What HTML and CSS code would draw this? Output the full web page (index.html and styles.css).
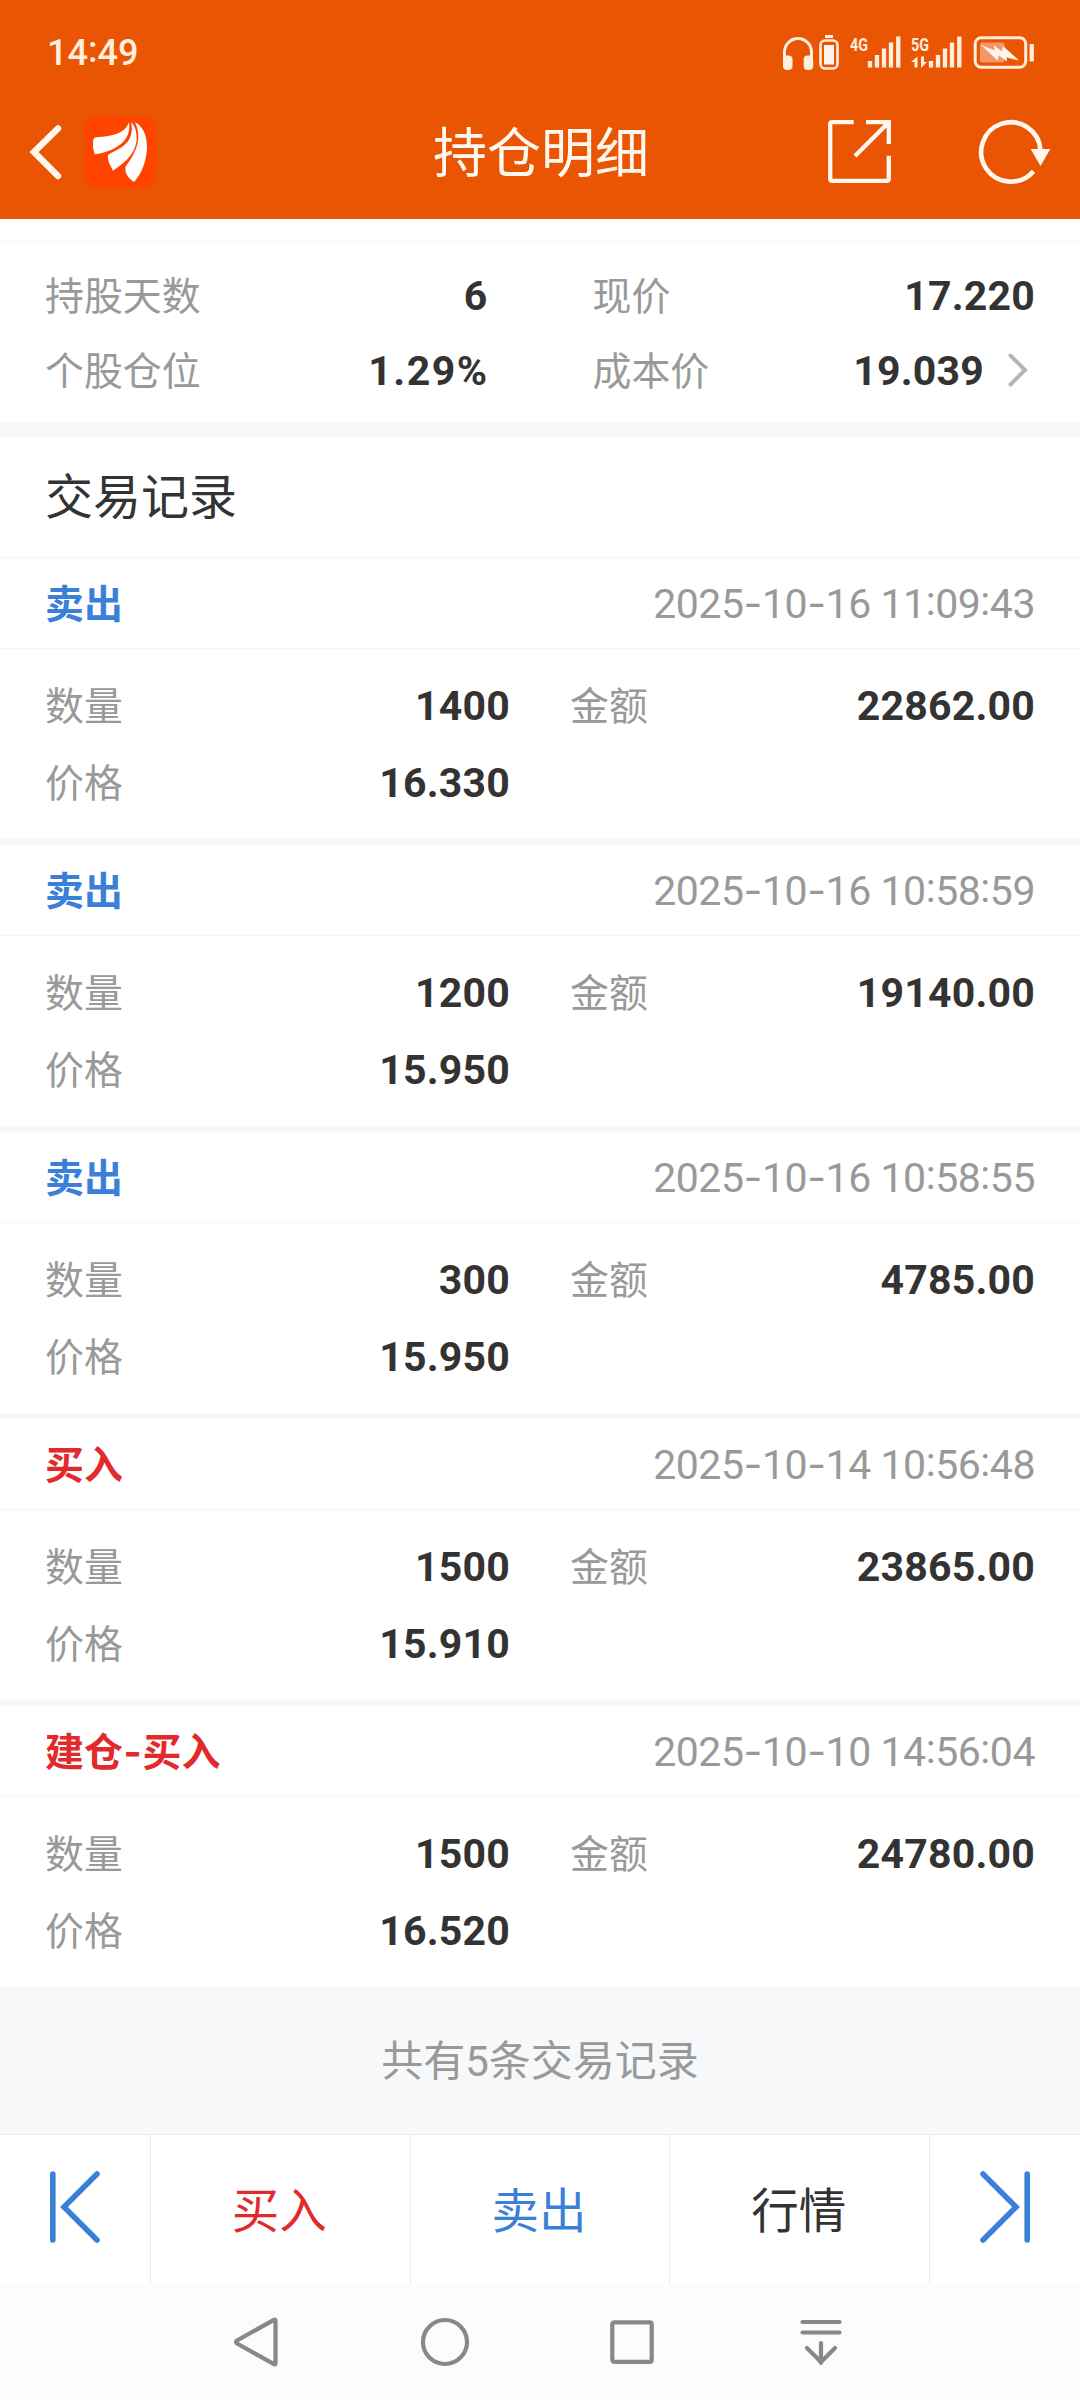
FILE: index.html
```html
<!DOCTYPE html>
<html lang="zh-CN">
<head>
<meta charset="utf-8">
<title>持仓明细</title>
<link rel="stylesheet" href="styles.css">
</head>
<body>
<header class="header">
  <div class="status">
    <span class="clock">14<span class="colon">:</span>49</span>
    <svg class="status-icons" viewBox="780 30 260 44" fill="none" stroke="#ffeedd">
      <path d="M784.5 58V52a13.500 13.500 0 0 1 27 0V58" stroke-width="3"/>
      <rect x="783" y="55.500" width="9.500" height="14.500" rx="4" fill="#ffeedd" stroke="none"/>
      <rect x="803.700" y="55.500" width="9.500" height="14.500" rx="4" fill="#ffeedd" stroke="none"/>
      <rect x="820.500" y="40.500" width="17" height="28" rx="4.500" stroke-width="2.600"/>
      <path d="M825 36.500h8" stroke-width="3"/>
      <rect x="824" y="45" width="10" height="19.500" fill="#fff4ea" stroke="none"/>
      <path d="M870 61v6.500M877 55v12.500M884 48.500v19M891 42.500v25M898.300 36.500v31" stroke-width="4.300"/>
      <path d="M931 61v6.500M938 55v12.500M945 48.500v19M952 42.500v25M959.300 36.500v31" stroke-width="4.300"/>
      <path d="M917.500 56.500v11h-3v-5.500h-3.500zM921 56.500v11.500l6-6h-3v-5.500z" fill="#ffeedd" stroke="none"/>
      <rect x="975.200" y="37.700" width="50.500" height="29.500" rx="6" stroke-width="3"/>
      <path d="M1031.700 44v17.500" stroke-width="4.300"/>
      <rect x="980" y="42.500" width="24.500" height="20" rx="2.500" fill="#f4966b" stroke="none"/>
      <path d="M981 45l14 5.500-1.500-5.500 8.500 6.500 1-5.500 16 14.500-12.500-3 .5 4-8-6-1.500 5z" fill="#fff4ea" stroke="none"/>
      <g class="net" fill="#ffeedd" stroke="none">
        <text x="850" y="50.500" textLength="18" lengthAdjust="spacingAndGlyphs">4G</text>
        <text x="911" y="50.500" textLength="18" lengthAdjust="spacingAndGlyphs">5G</text>
      </g>
    </svg>
  </div>
  <div class="titlebar">
    <div class="side">
      <svg class="back" viewBox="0 0 34 60" fill="none" stroke="#fff8ee" stroke-width="6.500" stroke-linecap="round"><path d="M29 6.500L5 30 29 54"/></svg>
      <svg class="logo" viewBox="253 347 216 216"><rect x="253" y="347" width="216" height="216" rx="40" fill="#ff4400"/><g fill="#fff"><path d="M387 367C378 396 345 407 288 411Q281 413 280 424Q278 442 285 462C345 452 396 424 388 367Z"/><path d="M395 365C404 424 372 440 325 463Q323 472 328 487L340 511C384 482 406 458 411 420Q413 386 395 365Z"/><path d="M406 366C424 404 420 444 377 500C376 520 386 534 403 545C426 520 441 482 442 440C441 400 428 377 406 366Z"/></g></svg>
    </div>
    <h1>持仓明细</h1>
    <div class="side tools">
      <svg class="share" viewBox="828 120 63 63" fill="none" stroke="#fff8ee" stroke-width="4.300"><path d="M853.700 122.200H832.200Q830.200 122.200 830.200 124.200V178.800Q830.200 180.800 832.200 180.800H886.800Q888.800 180.800 888.800 178.800V155.700M866 122.200H888.800V144M888.800 122.200L855 156"/></svg>
      <svg class="refresh" viewBox="977 117 76 68" fill="none" stroke="#fff8ee" stroke-width="4.600"><path d="M1040.500 149A29.700 29.700 0 1 0 1033.500 170.200"/><path d="M1030.700 148H1050.300L1040.500 165Z" fill="#fff8ee" stroke="none"/></svg>
    </div>
  </div>
</header>
<section class="summary">
  <dl><dt>持股天数</dt><dd>6</dd></dl>
  <dl><dt>现价</dt><dd>17.220</dd></dl>
  <dl><dt>个股仓位</dt><dd class="percent">1.29%</dd></dl>
  <dl><dt>成本价</dt><dd>19.039</dd><svg class="more" viewBox="0 0 20 34" fill="none" stroke="#b5b5b5" stroke-width="4" stroke-linecap="round"><path d="M2.500 2.500L17 17 2.500 31.500"/></svg></dl>
</section>
<h2 class="section-title">交易记录</h2>
<main>
  <article class="record">
    <div class="record-head"><b class="sell">卖出</b><time>2025<i>-</i>10<i>-</i>16 11<span class="colon">:</span>09<span class="colon">:</span>43</time></div>
    <div class="record-body"><dl><dt>数量</dt><dd>1400</dd></dl><dl><dt>金额</dt><dd>22862.00</dd></dl><dl><dt>价格</dt><dd>16.330</dd></dl></div>
  </article>
  <article class="record">
    <div class="record-head"><b class="sell">卖出</b><time>2025<i>-</i>10<i>-</i>16 10<span class="colon">:</span>58<span class="colon">:</span>59</time></div>
    <div class="record-body"><dl><dt>数量</dt><dd>1200</dd></dl><dl><dt>金额</dt><dd>19140.00</dd></dl><dl><dt>价格</dt><dd>15.950</dd></dl></div>
  </article>
  <article class="record">
    <div class="record-head"><b class="sell">卖出</b><time>2025<i>-</i>10<i>-</i>16 10<span class="colon">:</span>58<span class="colon">:</span>55</time></div>
    <div class="record-body"><dl><dt>数量</dt><dd>300</dd></dl><dl><dt>金额</dt><dd>4785.00</dd></dl><dl><dt>价格</dt><dd>15.950</dd></dl></div>
  </article>
  <article class="record">
    <div class="record-head"><b class="buy">买入</b><time>2025<i>-</i>10<i>-</i>14 10<span class="colon">:</span>56<span class="colon">:</span>48</time></div>
    <div class="record-body"><dl><dt>数量</dt><dd>1500</dd></dl><dl><dt>金额</dt><dd>23865.00</dd></dl><dl><dt>价格</dt><dd>15.910</dd></dl></div>
  </article>
  <article class="record">
    <div class="record-head"><b class="buy">建仓<i>-</i>买入</b><time>2025<i>-</i>10<i>-</i>10 14<span class="colon">:</span>56<span class="colon">:</span>04</time></div>
    <div class="record-body"><dl><dt>数量</dt><dd>1500</dd></dl><dl><dt>金额</dt><dd>24780.00</dd></dl><dl><dt>价格</dt><dd>16.520</dd></dl></div>
  </article>
</main>
<p class="total">共有5条交易记录</p>
<div class="actions">
  <a><svg class="jump" viewBox="0 0 52 72" fill="none" stroke="#3a80d9" stroke-width="5.600" stroke-linecap="round"><path d="M3.800 3V69M48 3L15 36 48 69"/></svg></a>
  <a class="buy">买入</a>
  <a class="sell">卖出</a>
  <a>行情</a>
  <a><svg class="jump" viewBox="0 0 52 72" fill="none" stroke="#3a80d9" stroke-width="5.600" stroke-linecap="round"><path d="M48.200 3V69M4 3L37 36 4 69"/></svg></a>
</div>
<nav class="sysnav">
  <svg viewBox="0 0 56 56"><path d="M45.500 6.500V49.500Q45.500 51 44 50.200L7 29.500Q5 28 7 26.500L44 5.800Q45.500 5 45.500 6.500Z"/></svg>
  <svg viewBox="0 0 56 56"><circle cx="28" cy="28" r="22"/></svg>
  <svg viewBox="0 0 56 56"><rect x="8.300" y="8.300" width="39.400" height="39.600" rx="2"/></svg>
  <svg viewBox="0 0 56 56" stroke-linecap="round"><path d="M9.500 8H46.500M9.500 18.500H46.500M28 29V49M14 34L28 48 42 34"/></svg>
</nav>
</body>
</html>
```
FILE: styles.css
```css
* { box-sizing: border-box; margin: 0; padding: 0; }
body {
  width: 1080px;
  height: 2400px;
  overflow: hidden;
  background: #fff;
  color: #333;
  font-family: Roboto, "Noto Sans CJK SC", sans-serif;
}
svg { display: block; flex: none; }
i { font-family: Inter, sans-serif; font-style: normal; }
.colon { position: relative; top: -3px; }

.header { height: 219px; background: #ea5504; color: #fff8ee; }
.status {
  height: 104px;
  padding: 0 40px 0 47px;
  display: flex;
  justify-content: space-between;
  align-items: center;
}
.clock { padding-top: 1px; font-size: 36px; font-weight: 500; color: #ffeedd; }
.status-icons { width: 260px; height: 44px; }
.net text { font: bold 18px Roboto, sans-serif; }
.titlebar {
  height: 95px;
  padding: 0 27px 0 29px;
  display: grid;
  grid-template-columns: 1fr auto 1fr;
  align-items: center;
}
.side { display: flex; align-items: center; }
.tools { justify-content: flex-end; gap: 86px; }
.back { width: 34px; height: 60px; margin-right: 21px; }
.logo { width: 72px; height: 72px; }
.titlebar h1 { padding-top: 6px; font-size: 54px; font-weight: 400; line-height: 80px; }
.share { width: 63px; height: 63px; }
.refresh { width: 76px; height: 68px; }

dl { display: flex; align-items: center; justify-content: space-between; }
dt { padding-bottom: 5px; font-size: 38.900px; color: #999; }
dd { font-size: 41px; font-weight: 700; letter-spacing: .2px; }
.percent { letter-spacing: 1.500px; margin-right: -1px; }

.summary {
  height: 196px;
  margin-top: 22px;
  padding: 16px 45px 0;
  border-top: 1px solid #f5f5f7;
  border-bottom: 15px solid #f6f8fa;
  display: grid;
  grid-template-columns: 1fr 1fr;
  grid-auto-rows: 75px;
  column-gap: 105px;
  align-content: start;
}
.summary dt { margin-right: auto; }
.more { width: 20px; height: 34px; margin: 0 7px 2px 24px; }
.section-title {
  height: 120px;
  padding-left: 45px;
  font-size: 48px;
  font-weight: 400;
  line-height: 121px;
}

.record { height: 287px; border-bottom: 6px solid #f6f8fa; }
.record:first-child { height: 288px; border-top: 1px solid #f5f5f7; }
.record:last-child { height: 281px; border-bottom: 0; }
.record-head {
  height: 91px;
  padding: 0 45px;
  border-bottom: 1px solid #f5f5f7;
  display: flex;
  align-items: center;
  justify-content: space-between;
  font-size: 38.900px;
}
.record-head b { padding-bottom: 4px; }
.record-head b i { margin: 0 .8px; }
time { font-size: 41px; color: #999; letter-spacing: -.45px; }
.buy { color: #e2292b; }
.sell { color: #3a80d9; }
.record-body {
  padding: 18px 45px 0;
  display: grid;
  grid-template-columns: 1fr 1fr;
  grid-auto-rows: 77px;
  column-gap: 60px;
}

.total {
  height: 147px;
  background: #f6f8fa;
  color: #999;
  font-size: 42px;
  line-height: 149px;
  text-align: center;
}
.actions {
  height: 150px;
  border-top: 1px solid #e9ebee;
  display: grid;
  grid-template-columns: 150px 1fr 1fr 1fr 151px;
  font-size: 47.500px;
}
.actions a { padding: 0 2px 5px 0; display: flex; align-items: center; justify-content: center; }
.actions a + a { border-left: 1px solid #e9ebee; }
.jump { width: 52px; height: 72px; }
.actions a:first-child { padding-right: 1px; }
.actions a:last-child { padding-right: 0; }
.sysnav {
  height: 116px;
  padding: 0 231px 0 230px;
  background: #fcfcfc;
  display: flex;
  align-items: center;
  justify-content: space-between;
}
.sysnav svg { width: 56px; height: 56px; fill: none; stroke: #888; stroke-width: 4.200px; }
.sysnav svg:nth-child(2), .sysnav svg:nth-child(3) { margin: 0 1px 0 -1px; }
```
